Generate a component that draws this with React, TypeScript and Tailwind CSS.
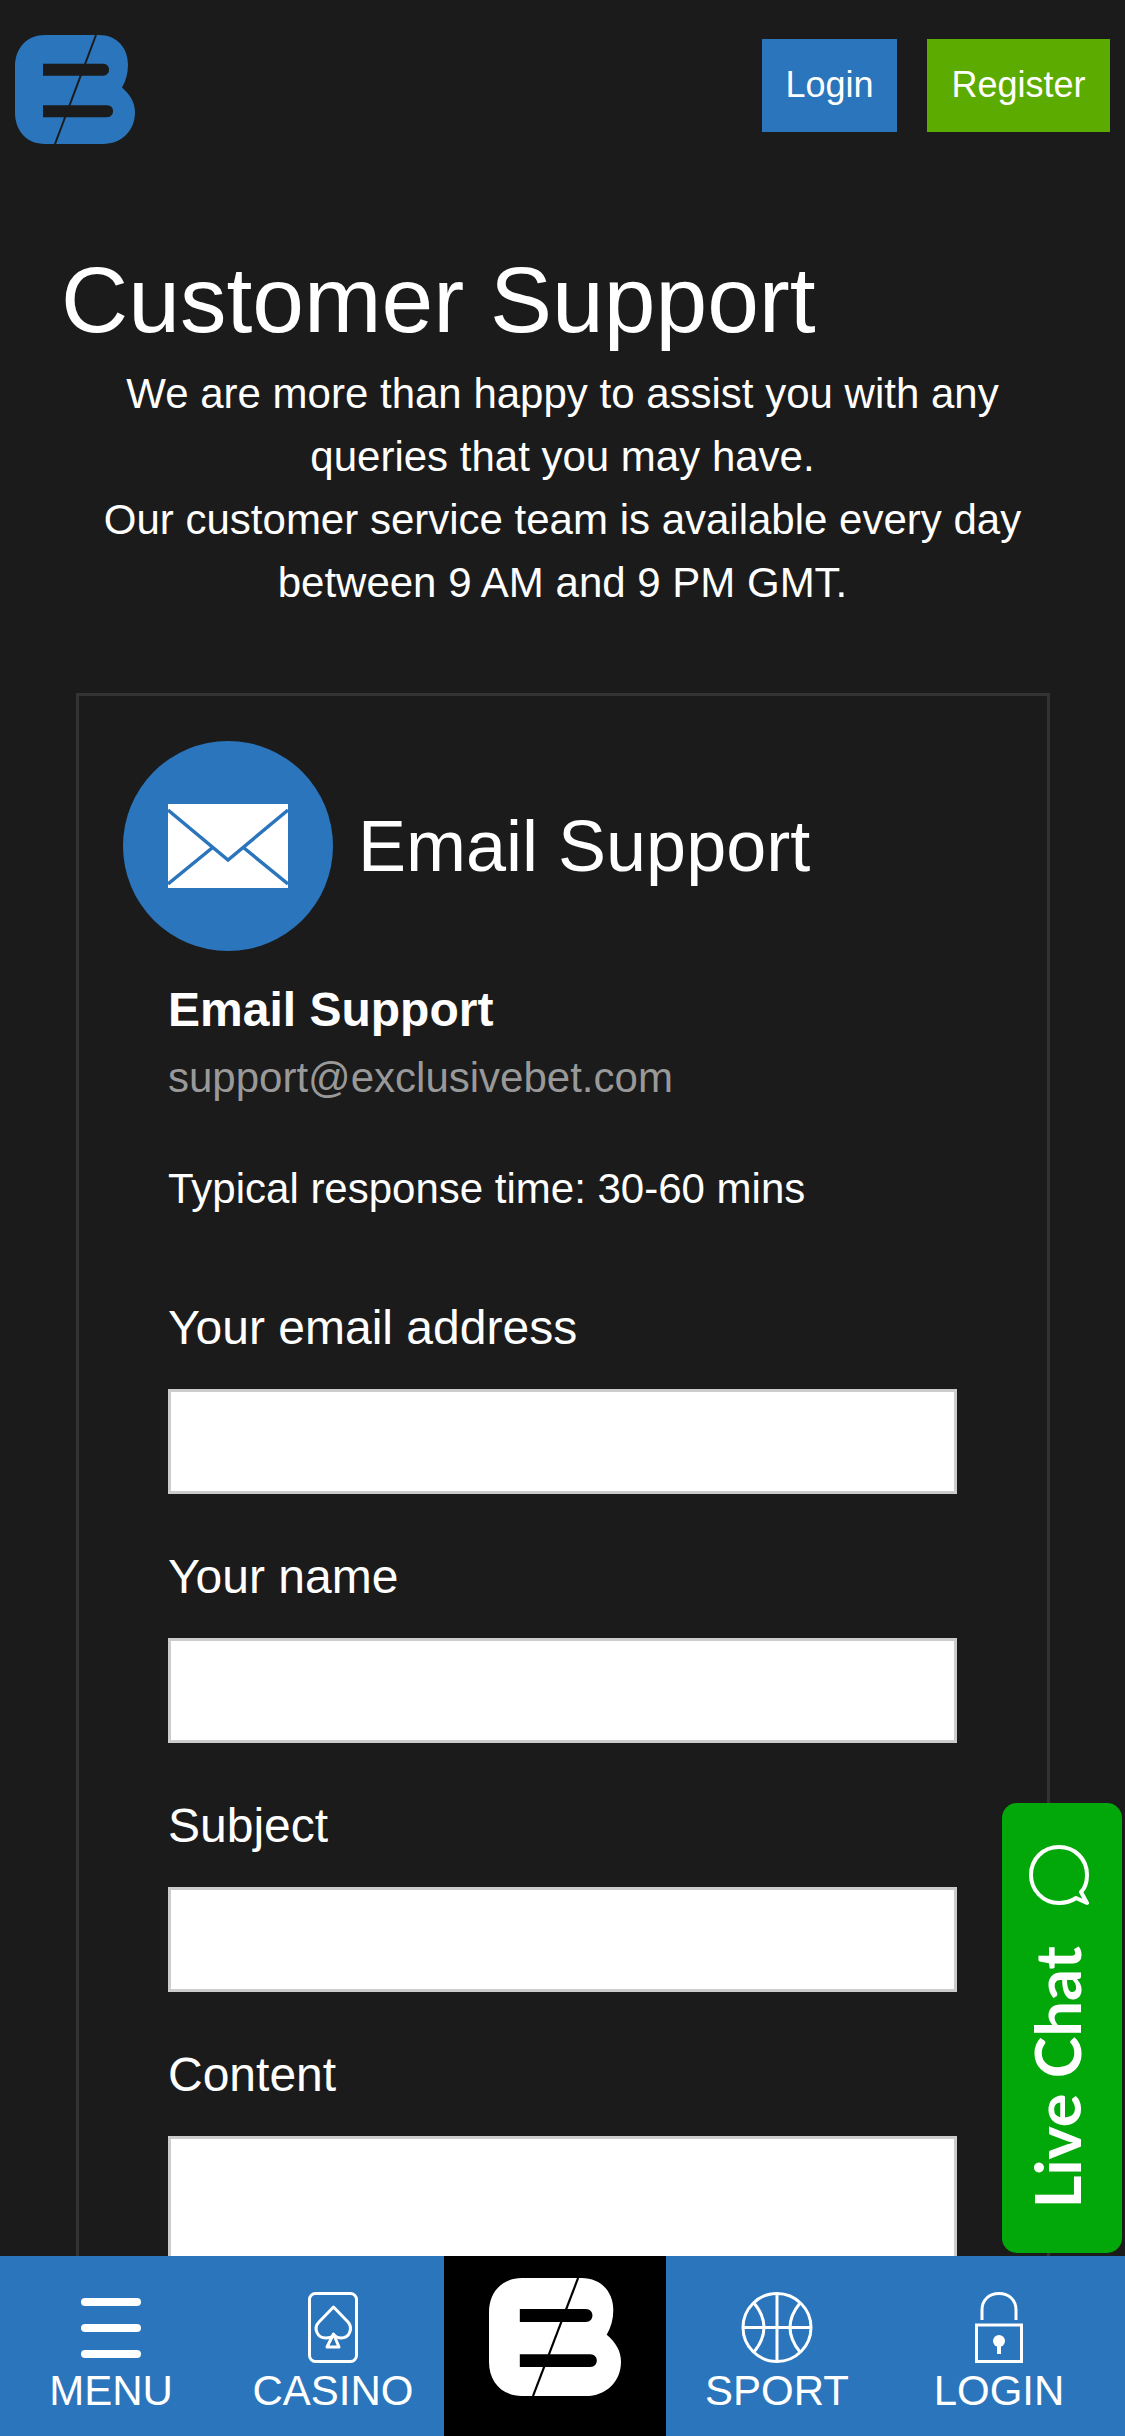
const BLUE = "#2a75bb"

function Logo({ fill, cut, className }: { fill: string; cut: string; className: string }) {
  return (
    <svg viewBox="0 0 120 110" preserveAspectRatio="none" className={className}>
      <path
        d="M30 0H84C102 0 113 13 113 30C113 38 111 46 107 53C115 60 120 68 120 78C120 97 106 110 88 110H30C12 110 0 97 0 78V32C0 13 12 0 30 0Z"
        fill={fill}
      />
      <path d="M28 29H88C92 29 94 32 94 35C94 38 92 41 88 41H28Z" fill={cut} />
      <path d="M28 71H92C96 71 98 74 98 77C98 80 96 83 92 83H28Z" fill={cut} />
      <path d="M81 0L40 110" stroke={cut} strokeWidth="2" />
    </svg>
  )
}

function Field({ label, multiline }: { label: string; multiline?: boolean }) {
  return (
    <div className="mb-[53px]">
      <label className="block text-[48px] leading-[60px] text-white mb-[31px]">{label}</label>
      {multiline ? (
        <textarea className="block w-[789px] h-[210px] bg-white border-[3px] border-[#cccccc] resize-none" />
      ) : (
        <input type="text" className="block w-[789px] h-[105px] bg-white border-[3px] border-[#cccccc]" />
      )}
    </div>
  )
}

function NavItem({ label, children }: { label: string; children: React.ReactNode }) {
  return (
    <div className="flex flex-col items-center pt-[36px]">
      <div className="h-[71px] flex items-center justify-center">{children}</div>
      <span className="text-[42px] leading-[48px] mt-[4px] text-white">{label}</span>
    </div>
  )
}

export default function App() {
  return (
    <div className="relative h-[2436px] overflow-hidden bg-[#1b1b1b] text-white font-['Liberation_Sans',Arial,sans-serif]">
      <header className="flex items-start justify-between pt-[39px] pl-[15px] pr-[15px]">
        <Logo fill={BLUE} cut="#1b1b1b" className="w-[120px] h-[109px] -mt-[4px]" />
        <div className="flex gap-[30px]">
          <a className="w-[135px] h-[93px] pb-[2px] flex items-center justify-center text-[36px] text-white bg-[#2a75bb]">Login</a>
          <a className="w-[183px] h-[93px] pb-[2px] flex items-center justify-center text-[36px] text-white bg-[#5cab00]">Register</a>
        </div>
      </header>

      <h1 className="mt-[100px] pl-[61px] text-[93px] leading-[112px] font-normal">Customer Support</h1>

      <p className="mt-[6px] mx-auto w-[960px] text-center text-[42px] leading-[63px]">
        We are more than happy to assist you with any queries that you may have.
        <br />
        Our customer service team is available every day between 9 AM and 9 PM GMT.
      </p>

      <section className="mt-[79px] ml-[76px] w-[974px] border-[3px] border-[#333333] pt-[45px] pl-[44px]">
        <div className="flex items-center gap-[25px]">
          <div className="w-[210px] h-[210px] rounded-full bg-[#2a75bb] flex items-center justify-center">
            <svg viewBox="0 0 120 84" className="w-[120px] h-[84px]">
              <rect width="120" height="84" fill="#ffffff" />
              <path d="M0 6L60 56L120 6M0 80L44 44M120 80L76 44" fill="none" stroke={BLUE} strokeWidth="3.500" />
            </svg>
          </div>
          <h2 className="text-[72px] leading-[80px] font-normal">Email Support</h2>
        </div>

        <div className="pl-[45px]">
          <h3 className="mt-[32px] text-[48px] leading-[54px] font-bold">Email Support</h3>
          <a className="block mt-[14px] text-[42px] leading-[54px] text-[#999999]">support@exclusivebet.com</a>
          <p className="mt-[57px] text-[42px] leading-[54px]">Typical response time: 30-60 mins</p>

          <div className="mt-[82px]">
            <Field label="Your email address" />
            <Field label="Your name" />
            <Field label="Subject" />
            <Field label="Content" multiline />
          </div>
        </div>
      </section>

      {/* fixed live chat tab */}
      <div className="absolute left-[1002px] top-[1803px] w-[120px] h-[450px] rounded-[15px] bg-[#02a70a] flex flex-col items-center pt-[42px]">
        <svg viewBox="0 0 60 60" className="w-[60px] h-[60px] -ml-[6px]">
          <path
            d="M58 58L47 53C42 56.500 36 58 30 58C14 58 2 45 2 30C2 14 14 2 30 2C46 2 58 14 58 30C58 37 56 43 52 47L58 58Z"
            fill="none"
            stroke="#ffffff"
            strokeWidth="4"
            strokeLinejoin="round"
          />
        </svg>
        <span className="mt-[41px] -ml-[10px] font-['Lato',sans-serif] text-[63px] leading-[64px] font-bold [writing-mode:vertical-rl] rotate-180">
          Live Chat
        </span>
      </div>

      {/* bottom nav */}
      <nav className="absolute left-0 right-0 bottom-0 h-[180px] bg-[#2a75bb] grid grid-cols-[222px_222px_222px_222px_222px]">
        <NavItem label="MENU">
          <div className="flex flex-col gap-[18px] w-[60px]">
            <span className="block h-[8px] rounded-full bg-white" />
            <span className="block h-[8px] rounded-full bg-white" />
            <span className="block h-[8px] rounded-full bg-white" />
          </div>
        </NavItem>
        <NavItem label="CASINO">
          <svg viewBox="0 0 50 71" className="w-[50px] h-[71px]" fill="none" stroke="#ffffff" strokeWidth="3">
            <rect x="1.500" y="1.500" width="47" height="68" rx="6" />
            <path d="M25.500 15L40 30C45 36 42 46 33 46C30 46 28 45 26 43C24 45 21 46 18 46C9 46 5 36 11 30Z" strokeLinejoin="round" />
            <path d="M25.500 42L31 55H19Z" strokeLinejoin="round" />
          </svg>
        </NavItem>
        <div className="bg-black flex items-start justify-center pt-[22px]">
          <Logo fill="#ffffff" cut="#000000" className="w-[132px] h-[118px]" />
        </div>
        <NavItem label="SPORT">
          <svg viewBox="0 0 72 71" className="w-[72px] h-[71px]" fill="none" stroke="#ffffff" strokeWidth="3">
            <circle cx="36" cy="35.500" r="34" />
            <path d="M36 2V69M2 35.500H70" />
            <path d="M13 11Q33 35.500 13 60M59 11Q39 35.500 59 60" />
          </svg>
        </NavItem>
        <NavItem label="LOGIN">
          <svg viewBox="0 0 48 71" className="w-[48px] h-[71px]" fill="none" stroke="#ffffff" strokeWidth="3">
            <path d="M7 28V18C7 8 14 1.500 24 1.500C34 1.500 41 8 41 18V28" />
            <rect x="1.500" y="33" width="45" height="36.500" />
            <circle cx="24" cy="49" r="6" fill="#ffffff" stroke="none" />
            <path d="M24 52V62" strokeWidth="4" />
          </svg>
        </NavItem>
      </nav>
    </div>
  )
}
